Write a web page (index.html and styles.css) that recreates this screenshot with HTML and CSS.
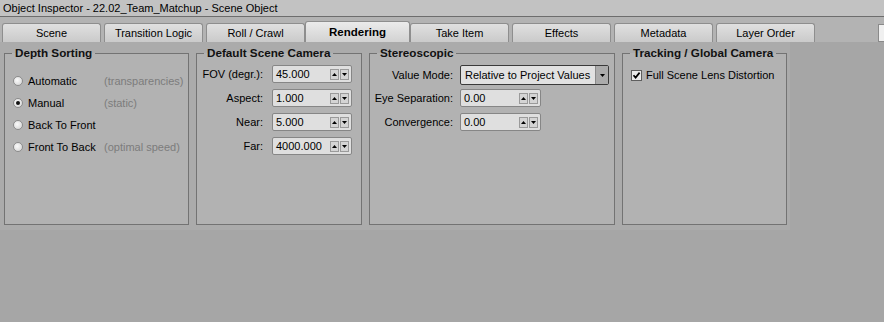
FILE: index.html
```html
<!DOCTYPE html>
<html>
<head>
<meta charset="utf-8">
<title>Object Inspector</title>
<link rel="stylesheet" href="styles.css">
</head>
<body>
<div class="titlebar">Object Inspector - 22.02_Team_Matchup - Scene Object</div>
<div class="tabstrip">
  <div class="tab">Scene</div>
  <div class="tab">Transition Logic</div>
  <div class="tab">Roll / Crawl</div>
  <div class="tab active">Rendering</div>
  <div class="tab">Take Item</div>
  <div class="tab">Effects</div>
  <div class="tab">Metadata</div>
  <div class="tab">Layer Order</div>
  <div class="tab-extra"></div>
</div>
<div class="content">
  <fieldset class="group g-depth">
    <legend>Depth Sorting</legend>
    <div class="radio-list">
      <div class="radio-row"><span class="radio"></span><span class="rlabel">Automatic</span><span class="hint">(transparencies)</span></div>
      <div class="radio-row"><span class="radio on"></span><span class="rlabel">Manual</span><span class="hint">(static)</span></div>
      <div class="radio-row"><span class="radio"></span><span class="rlabel">Back To Front</span></div>
      <div class="radio-row"><span class="radio"></span><span class="rlabel">Front To Back</span><span class="hint">(optimal speed)</span></div>
    </div>
  </fieldset>

  <fieldset class="group g-cam">
    <legend>Default Scene Camera</legend>
    <div class="fields">
      <div class="frow"><span class="flabel">FOV (degr.):</span>
        <div class="spin"><span class="val">45.000</span><span class="sbtns"><span class="sbtn"><svg width="5" height="3" viewBox="0 0 5 3"><path d="M0 3L2.5 0L5 3Z"/></svg></span><span class="sbtn"><svg width="5" height="3" viewBox="0 0 5 3"><path d="M0 0L5 0L2.5 3Z"/></svg></span></span></div>
      </div>
      <div class="frow"><span class="flabel">Aspect:</span>
        <div class="spin"><span class="val">1.000</span><span class="sbtns"><span class="sbtn"><svg width="5" height="3" viewBox="0 0 5 3"><path d="M0 3L2.5 0L5 3Z"/></svg></span><span class="sbtn"><svg width="5" height="3" viewBox="0 0 5 3"><path d="M0 0L5 0L2.5 3Z"/></svg></span></span></div>
      </div>
      <div class="frow"><span class="flabel">Near:</span>
        <div class="spin"><span class="val">5.000</span><span class="sbtns"><span class="sbtn"><svg width="5" height="3" viewBox="0 0 5 3"><path d="M0 3L2.5 0L5 3Z"/></svg></span><span class="sbtn"><svg width="5" height="3" viewBox="0 0 5 3"><path d="M0 0L5 0L2.5 3Z"/></svg></span></span></div>
      </div>
      <div class="frow"><span class="flabel">Far:</span>
        <div class="spin"><span class="val">4000.000</span><span class="sbtns"><span class="sbtn"><svg width="5" height="3" viewBox="0 0 5 3"><path d="M0 3L2.5 0L5 3Z"/></svg></span><span class="sbtn"><svg width="5" height="3" viewBox="0 0 5 3"><path d="M0 0L5 0L2.5 3Z"/></svg></span></span></div>
      </div>
    </div>
  </fieldset>

  <fieldset class="group g-stereo">
    <legend>Stereoscopic</legend>
    <div class="fields">
      <div class="frow first"><span class="flabel">Value Mode:</span>
        <div class="dropdown"><span class="dd-val">Relative to Project Values</span><span class="dd-btn"><svg width="5" height="3" viewBox="0 0 5 3"><path d="M0 0L5 0L2.5 3Z"/></svg></span></div>
      </div>
      <div class="frow"><span class="flabel">Eye Separation:</span>
        <div class="spin"><span class="val">0.00</span><span class="sbtns"><span class="sbtn"><svg width="5" height="3" viewBox="0 0 5 3"><path d="M0 3L2.5 0L5 3Z"/></svg></span><span class="sbtn"><svg width="5" height="3" viewBox="0 0 5 3"><path d="M0 0L5 0L2.5 3Z"/></svg></span></span></div>
      </div>
      <div class="frow"><span class="flabel">Convergence:</span>
        <div class="spin"><span class="val">0.00</span><span class="sbtns"><span class="sbtn"><svg width="5" height="3" viewBox="0 0 5 3"><path d="M0 3L2.5 0L5 3Z"/></svg></span><span class="sbtn"><svg width="5" height="3" viewBox="0 0 5 3"><path d="M0 0L5 0L2.5 3Z"/></svg></span></span></div>
      </div>
    </div>
  </fieldset>

  <fieldset class="group g-track">
    <legend>Tracking / Global Camera</legend>
    <div class="check-row"><span class="checkbox"><svg width="9" height="9" viewBox="0 0 9 9"><path d="M1.5 4.2L3.6 6.6L7.6 1.6" fill="none" stroke="#000" stroke-width="1.7"/></svg></span><span>Full Scene Lens Distortion</span></div>
  </fieldset>
</div>
</body>
</html>
```
FILE: styles.css
```css
* { box-sizing: border-box; }
html, body { margin: 0; }
body {
  width: 884px;
  height: 322px;
  overflow: hidden;
  background: #a6a6a6;
  font-family: "Liberation Sans", Arial, sans-serif;
  font-size: 11px;
  color: #000;
}
.titlebar {
  height: 17px;
  line-height: 16px;
  padding-left: 3px;
  background: #c2c2c2;
  border-bottom: 1px solid #6d6d6d;
  white-space: nowrap;
}
.tabstrip {
  height: 25px;
  display: flex;
  align-items: flex-end;
  gap: 3px;
  padding-left: 2px;
  background: #b3b3b3;
}
.tab {
  flex: 0 0 99px;
  height: 19px;
  line-height: 18px;
  text-align: center;
  border: 1px solid #8e8e8e;
  border-bottom: 0;
  border-radius: 3px 3px 0 0;
  background: linear-gradient(#e0e0e0, #cacaca);
  white-space: nowrap;
}
.tab.active {
  flex-basis: 105px;
  height: 21px;
  line-height: 20px;
  margin: 0 -3px;
  font-weight: bold;
  font-size: 11.5px;
  background: linear-gradient(#ebebeb, #d2d2d2);
  position: relative;
}
.tab-extra {
  flex: 0 0 14px;
  height: 18px;
  margin-left: auto;
  margin-right: -8px;
  border: 1px solid #8a8a8a;
  background: #f0f0f0;
}
.content {
  display: flex;
  gap: 7px;
  width: max-content;
  padding: 4px 3px 5px 4px;
  background: #ababab;
}
.group {
  margin: 0;
  padding: 0;
  min-width: 0;
  height: 179px;
  border: 1px solid #737373;
  background: #b2b2b2;
}
.group legend {
  margin-left: 7px;
  padding: 0 3px;
  font-weight: bold;
  font-size: 11.7px;
  line-height: 14px;
  color: #111;
}
.g-depth { width: 185px; }
.g-cam { width: 166px; }
.g-stereo { width: 246px; }
.g-track { width: 165px; }

/* radios */
.radio-list { padding: 10px 0 0 8px; }
.radio-row {
  display: flex;
  align-items: center;
  height: 22px;
  white-space: nowrap;
}
.radio {
  flex: 0 0 10px;
  width: 10px;
  height: 10px;
  margin-right: 5px;
  border-radius: 50%;
  border: 1px solid #8c8c8c;
  background: radial-gradient(circle at 40% 40%, #fafafa, #d0d0d0);
  display: flex;
  align-items: center;
  justify-content: center;
}
.radio.on::after {
  content: "";
  width: 4px;
  height: 4px;
  border-radius: 50%;
  background: #111;
}
.rlabel { width: 76px; }
.hint { color: #7c7c7c; }

/* field rows */
.fields { padding-top: 2px; }
.g-stereo .fields { padding-top: 4px; }
.frow {
  display: flex;
  align-items: center;
  height: 24px;
  white-space: nowrap;
}
.frow.first { height: 22px; }
.flabel { flex: 0 0 auto; text-align: right; }
.g-cam .flabel { width: 66px; margin-right: 9px; }
.g-stereo .flabel { width: 83px; margin-right: 7px; }

.spin {
  width: 80px;
  height: 18px;
  border: 1px solid #868686;
  border-radius: 2px;
  background: #dfdfdf;
  display: flex;
  align-items: center;
  padding: 0 2px 0 3px;
}
.g-stereo .spin { width: 81px; }
.val { flex: 1; }
.sbtns { display: flex; gap: 1px; }
.sbtn {
  width: 9px;
  height: 11px;
  border: 1px solid #9a9a9a;
  background: #d4d4d4;
  display: flex;
  align-items: center;
  justify-content: center;
}
.sbtn svg { display: block; }

.dropdown {
  width: 149px;
  height: 20px;
  border: 1px solid #3a3a3a;
  border-radius: 2px;
  background: #e1e1e1;
  display: flex;
  align-items: stretch;
}
.dd-val { flex: 1; padding-left: 4px; line-height: 18px; }
.dd-btn {
  width: 13px;
  background: #ababab;
  border-left: 1px solid #8a8a8a;
  display: flex;
  align-items: center;
  justify-content: center;
}

/* checkbox */
.check-row {
  display: flex;
  align-items: center;
  height: 14px;
  margin: 8px 0 0 8px;
  white-space: nowrap;
}
.checkbox {
  flex: 0 0 11px;
  width: 11px;
  height: 11px;
  margin-right: 4px;
  border: 1px solid #5e5e5e;
  background: #ececec;
  display: flex;
  align-items: center;
  justify-content: center;
}
.checkbox svg { display: block; }
```
